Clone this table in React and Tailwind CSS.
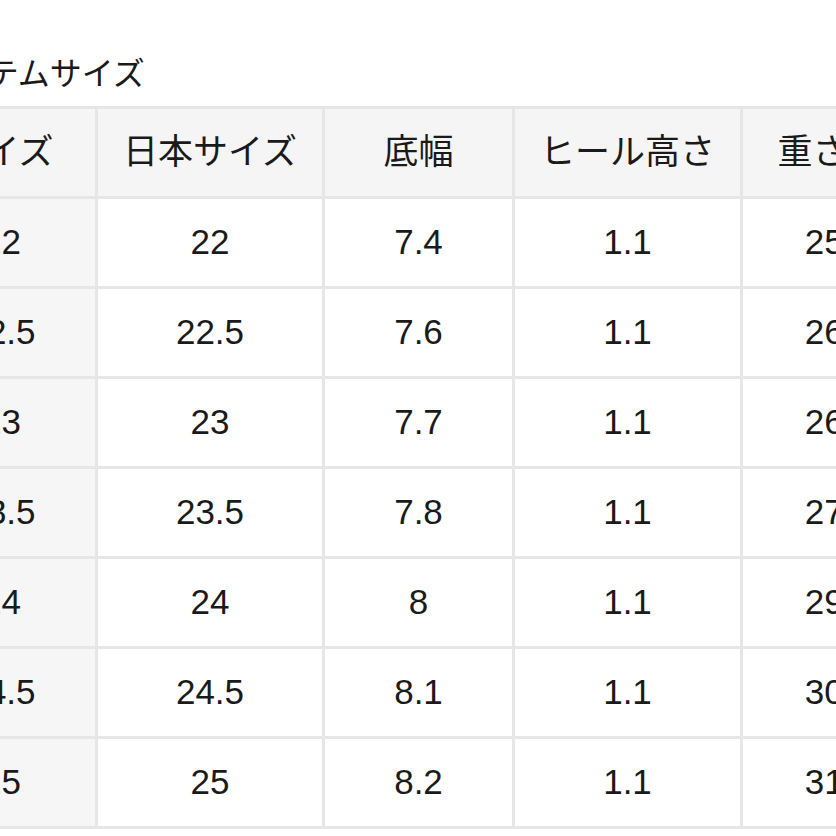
const rows = [
  ["22", "22", "7.4", "1.1", "250"],
  ["22.5", "22.5", "7.6", "1.1", "260"],
  ["23", "23", "7.7", "1.1", "265"],
  ["23.5", "23.5", "7.8", "1.1", "270"],
  ["24", "24", "8", "1.1", "290"],
  ["24.5", "24.5", "8.1", "1.1", "300"],
  ["25", "25", "8.2", "1.1", "310"],
];

const headers = ["サイズ", "日本サイズ", "底幅", "ヒール高さ", "重さ(g)"];

const App = () => {
  return (
    <div className="w-[836px] h-[836px] overflow-hidden bg-white text-[#1a1a1a] font-['Liberation_Sans','Noto_Sans_CJK_JP',sans-serif]">
      <div className="ml-[-95px] w-[1020px]">
        <h2 className="pt-[53px] pl-[20px] text-[32px] leading-[42px] font-normal">
          アイテムサイズ
        </h2>
        <table className="mt-[11px] table-fixed border-collapse w-[1020px] text-[35px]">
          <colgroup>
            <col className="w-[190px]" />
            <col className="w-[227px]" />
            <col className="w-[190px]" />
            <col className="w-[228px]" />
            <col className="w-[185px]" />
          </colgroup>
          <thead>
            <tr className="h-[90px] bg-[#f5f5f5]">
              {headers.map((h) => (
                <th key={h} className="border-[3px] border-[#e6e6e6] font-normal text-center">
                  {h}
                </th>
              ))}
            </tr>
          </thead>
          <tbody>
            {rows.map((r, i) => (
              <tr key={i} className="h-[90px]">
                {r.map((c, j) => (
                  <td
                    key={j}
                    className={
                      j === 0
                        ? "border-[3px] border-[#e6e6e6] text-center bg-[#f6f6f6]"
                        : "border-[3px] border-[#e6e6e6] text-center bg-white"
                    }
                  >
                    {c}
                  </td>
                ))}
              </tr>
            ))}
          </tbody>
        </table>
      </div>
    </div>
  );
};

export default App;
